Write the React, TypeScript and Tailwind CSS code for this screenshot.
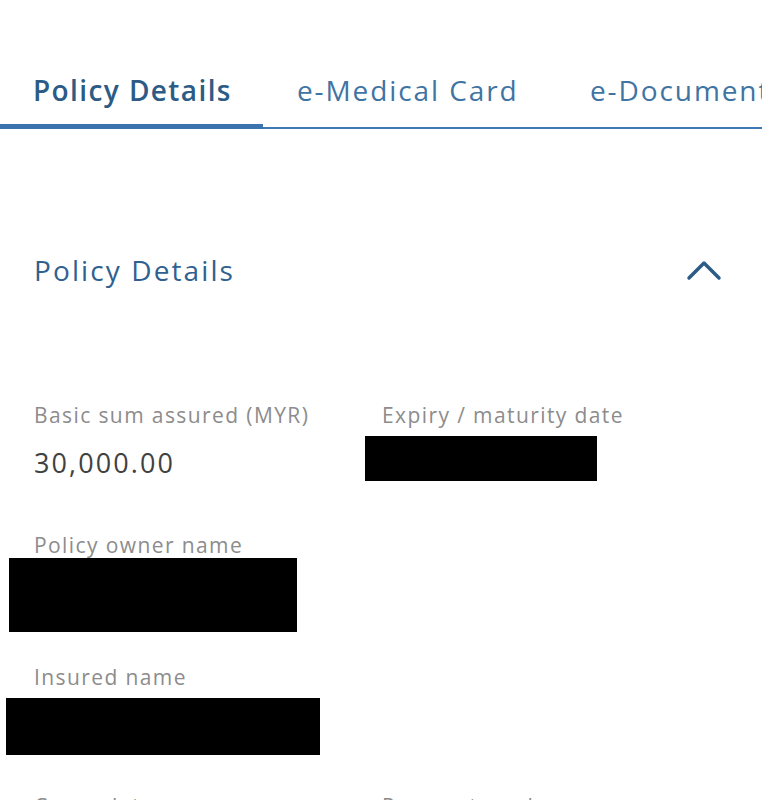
import React from "react";

const font = { fontFamily: "'Open Sans', Lato, sans-serif" };

const labelCls = "text-[21px] leading-[26px] text-[#8c8c8c] tracking-[1.4px] whitespace-nowrap";

export default function App() {
  return (
    <div className="w-[762px] h-[800px] bg-white overflow-hidden" style={font}>
      <div className="pt-[70px]">
        <div className="flex items-end whitespace-nowrap text-[28px] leading-[40px]">
          <div className="shrink-0 w-[263px] pl-[33px] font-semibold text-[#2c5b86] tracking-[1.4px]">Policy Details</div>
          <div className="shrink-0 pl-[34px] w-[327px] text-[#3f74a3] tracking-[1.9px]">e-Medical Card</div>
          <div className="shrink-0 text-[#3f74a3] tracking-[1.9px]">e-Documents</div>
        </div>
        <div className="relative mt-[14px] h-[5px]">
          <div className="absolute left-0 right-0 bottom-0 h-[2px] bg-[#3f78b2]" />
          <div className="absolute left-0 bottom-0 w-[263px] h-[5px] bg-[#3a73ad]" />
        </div>
      </div>

      <div className="mt-[124px] flex items-center justify-between pl-[34px] pr-[40px]">
        <div className="text-[28px] leading-[34px] text-[#2f6190] tracking-[2.1px]">Policy Details</div>
        <svg width="36" height="22" viewBox="0 0 36 22">
          <path d="M3 19 L18 4 L33 19" fill="none" stroke="#2c5b86" strokeWidth="3.5" strokeLinecap="round" strokeLinejoin="round" />
        </svg>
      </div>

      <div className="mt-[115px] grid grid-cols-[348px_1fr] pl-[34px]">
        <div className="flex flex-col">
          <div className={labelCls}>Basic sum assured (MYR)</div>
          <div className="mt-[18px] text-[27px] leading-[34px] text-[#414141] tracking-[2.1px]">30,000.00</div>
        </div>
        <div className="flex flex-col">
          <div className={labelCls}>Expiry / maturity date</div>
          <div className="mt-[8px] -ml-[17px] w-[232px] h-[45px] bg-black" />
        </div>
      </div>

      <div className="mt-[51px] pl-[34px]">
        <div className={labelCls}>Policy owner name</div>
        <div className="-ml-[25px] w-[288px] h-[74px] bg-black" />
      </div>

      <div className="mt-[32px] pl-[34px]">
        <div className={labelCls}>Insured name</div>
        <div className="mt-[8px] -ml-[28px] w-[314px] h-[57px] bg-black" />
      </div>

      <div className="mt-[38px] grid grid-cols-[348px_1fr] pl-[34px]">
        <div className={labelCls}>Cover date</div>
        <div className={labelCls}>Payment mode</div>
      </div>
    </div>
  );
}
